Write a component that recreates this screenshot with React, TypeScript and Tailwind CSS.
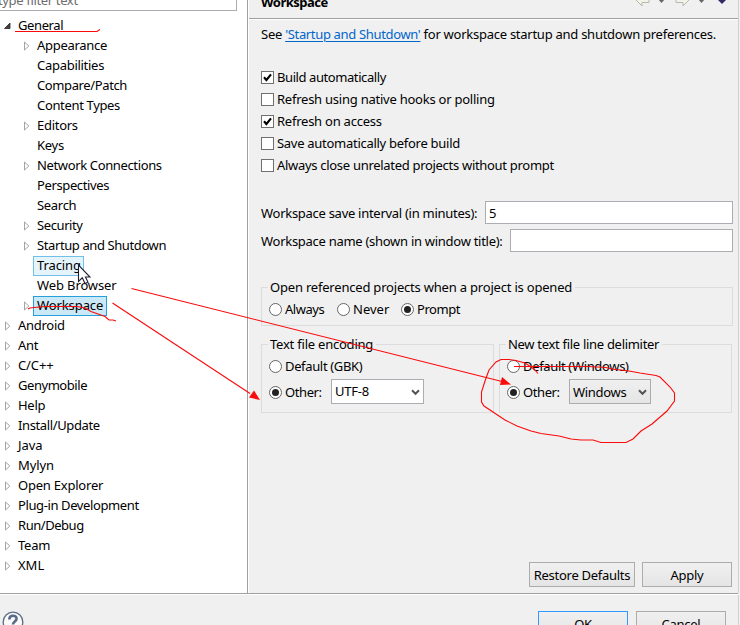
import type { ReactNode } from "react";

type Node = { label: string; level?: number; arrow?: boolean; open?: boolean; state?: "hover" | "selected"; tracking?: string };

const tree: Node[] = [
  { label: "General", arrow: true, open: true, tracking: "tracking-[-0.4px]" },
  { label: "Appearance", level: 1, arrow: true, tracking: "tracking-[-0.3px]" },
  { label: "Capabilities", level: 1 },
  { label: "Compare/Patch", level: 1, tracking: "tracking-[-0.38px]" },
  { label: "Content Types", level: 1, tracking: "tracking-[-0.34px]" },
  { label: "Editors", level: 1, arrow: true },
  { label: "Keys", level: 1 },
  { label: "Network Connections", level: 1, arrow: true, tracking: "tracking-[-0.36px]" },
  { label: "Perspectives", level: 1, tracking: "tracking-[-0.38px]" },
  { label: "Search", level: 1, tracking: "tracking-[-0.3px]" },
  { label: "Security", level: 1, arrow: true, tracking: "tracking-[-0.4px]" },
  { label: "Startup and Shutdown", level: 1, arrow: true, tracking: "tracking-[-0.4px]" },
  { label: "Tracing", level: 1, state: "hover", tracking: "tracking-[-0.1px]" },
  { label: "Web Browser", level: 1, tracking: "tracking-[-0.12px]" },
  { label: "Workspace", level: 1, arrow: true, state: "selected", tracking: "tracking-[-0.1px]" },
  { label: "Android", arrow: true },
  { label: "Ant", arrow: true },
  { label: "C/C++", arrow: true, tracking: "tracking-[-0.1px]" },
  { label: "Genymobile", arrow: true, tracking: "tracking-[-0.45px]" },
  { label: "Help", arrow: true },
  { label: "Install/Update", arrow: true, tracking: "tracking-[-0.38px]" },
  { label: "Java", arrow: true, tracking: "tracking-[-0.1px]" },
  { label: "Mylyn", arrow: true, tracking: "tracking-[-0.1px]" },
  { label: "Open Explorer", arrow: true, tracking: "tracking-[-0.22px]" },
  { label: "Plug-in Development", arrow: true, tracking: "tracking-[-0.39px]" },
  { label: "Run/Debug", arrow: true, tracking: "tracking-[-0.46px]" },
  { label: "Team", arrow: true, tracking: "tracking-[-0.2px]" },
  { label: "XML", arrow: true, tracking: "tracking-[0px]" },
];

function Row({ n }: { n: Node }) {
  const look =
    n.state === "hover"
      ? "border-[#70c0e7] bg-[#e5f3fb] w-[51px]"
      : n.state === "selected"
        ? "border-[#26a0da] bg-[#cbe8f6] w-[74px]"
        : "border-transparent";
  return (
    <div className={`flex h-5 items-center ${n.level ? "pl-[22px]" : "pl-[3px]"}`}>
      <svg width="9" height="10" viewBox="0 0 9 10" className="shrink-0">
        {n.open ? (
          <path d="M7 2V7.5H1.5Z" fill="#444" stroke="#262626" strokeWidth=".8" />
        ) : (
          n.arrow && <path d="M2.5 1V9L6.8 5Z" fill="#fff" stroke="#a2a2a2" />
        )}
      </svg>
      <span className={`ml-[2px] flex h-5 items-center border pl-[3px] ${look}`}>
        <span className={`-mt-[2px] ${n.tracking ?? ""}`}>{n.label}</span>
      </span>
    </div>
  );
}

function Check({ on, children }: { on?: boolean; children: ReactNode }) {
  return (
    <div className="flex h-[22px] items-center">
      <span className="mr-[3px] flex size-[13px] shrink-0 items-center justify-center border border-[#707070] bg-white">
        {on && (
          <svg width="11" height="11" viewBox="0 0 11 11" className="shrink-0">
            <path d="M2 5.2L4.4 8L9 2.4" fill="none" stroke="#000" strokeWidth="2.1" />
          </svg>
        )}
      </span>
      <span>{children}</span>
    </div>
  );
}

function Radio({ on, children, className = "" }: { on?: boolean; children: ReactNode; className?: string }) {
  return (
    <div className={`flex items-center ${className}`}>
      <span className="mr-[3px] flex size-[13px] shrink-0 items-center justify-center rounded-full border border-[#666] bg-white">
        {on && <span className="size-[7px] rounded-full bg-[#222]" />}
      </span>
      <span>{children}</span>
    </div>
  );
}

function Chevron() {
  return (
    <svg width="9" height="7" viewBox="0 0 9 7" className="mt-[2px] shrink-0">
      <path d="M1 1.2L4.5 4.8L8 1.2" fill="none" stroke="#555" strokeWidth="2" />
    </svg>
  );
}

function Group({ title, className, children }: { title: string; className: string; children: ReactNode }) {
  return (
    <div className={`flex flex-col border border-[#dcdcdc] ${className}`}>
      <div className="-mt-[11px] ml-[6px] flex h-[19px] shrink-0 items-center self-start bg-[#f0f0f0] pr-[3px] pl-[2px]">{title}</div>
      {children}
    </div>
  );
}

function Button({ className, children }: { className: string; children: ReactNode }) {
  return (
    <button
      className={`flex h-[25px] shrink-0 items-center justify-center border bg-linear-to-b from-[#f0f0f0] to-[#e5e5e5] ${className}`}
    >
      {children}
    </button>
  );
}

function NavArrow({ flip }: { flip?: boolean }) {
  return (
    <svg width="15" height="14" viewBox="0 0 15 14" className={flip ? "-scale-x-100" : ""}>
      <path d="M1 7L7 1V4H14V9.500H7V13Z" fill="#f2f2e8" stroke="#b8b8ae" />
    </svg>
  );
}

function Annotations() {
  return (
    <svg className="pointer-events-none absolute top-0 left-0" width="740" height="625" fill="none" stroke="#fa0a0a" strokeWidth="1.1">
      <path d="M15 31.5H97L100 29.5" />
      <path d="M28 309L30 308L34 307.5L45 306.5H77L85 308L91 311.5L105 316.5L109 320H113L116 321" />
      <path d="M131.500 288.500L502 381.500" />
      <path d="M112.500 303L250 393.500" />
      <path d="M260 400L249 397.500L254 390.500Z" fill="#fa0a0a" stroke="none" />
      <path d="M511 384.500L500 385L502 377Z" fill="#fa0a0a" stroke="none" />
      <path d="M538 373.500L534 369L525 363L516 360.500L509 359.500H501L496 362L489 370L485 381L481.500 392V402L484 406L493 412L505 420L517 426L531 431L541 433.500L559 436L571 439L581 440H593L601 442.500H626L633 439L641 431L652 424L667 411L674.500 401V393L670 387L660 377L656 375.500L640 373L629 371L612 369L606 367.500L588 366.500H514" />
      <path d="M78.500 265V281.500L82.300 277.800L85 283.500L88 282.200L85.500 277H90Z" fill="#fff" stroke="#202033" />
    </svg>
  );
}

export default function App() {
  return (
    <div className="relative flex h-[625px] w-[740px] flex-col overflow-hidden bg-[#f0f0f0] font-['Noto_Sans','Noto_Sans_CJK_SC',sans-serif] text-[13px] leading-[20px] tracking-[-0.28px] whitespace-nowrap text-black">
      <div className="flex h-[593px] shrink-0">
        <div className="flex w-[247px] shrink-0 flex-col bg-white">
          <div className="-mt-3 flex h-[23px] w-[237px] shrink-0 items-center border border-l-0 border-[#abadb3] text-[#6d6d6d]">
            <span className="-ml-[2px] tracking-[-0.35px]">type filter text</span>
          </div>
          <div className="mt-[5px] flex flex-col">
            {tree.map((n) => (
              <Row key={n.label} n={n} />
            ))}
          </div>
        </div>
        <div className="w-[2px] shrink-0 border-r border-l border-r-white border-l-[#a0a0a0]" />
        <div className="flex w-[489px] flex-col">
          <div className="flex h-[20px] shrink-0 items-end justify-between border-b border-white">
            <div className="flex h-[19px] w-full justify-between border-b border-[#a0a0a0] pl-3">
              <b className="-mt-[8px] tracking-[-0.5px]">Workspace</b>
              <div className="-mt-[7px] flex pr-[11px]">
                <NavArrow />
                <svg width="8" height="12" viewBox="0 0 8 12" className="mr-[9px] ml-[8px]">
                  <path d="M0 6H7L3.500 10Z" fill="#666" />
                </svg>
                <NavArrow flip />
                <svg width="8" height="12" viewBox="0 0 8 12" className="mr-[11px] ml-[8px]">
                  <path d="M0 6H7L3.500 10Z" fill="#666" />
                </svg>
                <svg width="10" height="12" viewBox="0 0 10 12">
                  <path d="M0 6H10L5 11Z" fill="#332a63" />
                </svg>
              </div>
            </div>
          </div>
          <div className="flex flex-col pl-3">
            <p className="mt-[4px] tracking-[-0.26px]">
              See <span className="tracking-[-0.34px] text-[#0066cc] underline underline-offset-2">'Startup and Shutdown'</span> for workspace startup and shutdown preferences.
            </p>
            <div className="mt-[22px] flex flex-col">
              <Check on>
                <span className="tracking-[-0.42px]">Build automatically</span>
              </Check>
              <Check>
                <span className="tracking-[-0.24px]">Refresh using native hooks or polling</span>
              </Check>
              <Check on>
                <span className="tracking-[-0.24px]">Refresh on access</span>
              </Check>
              <Check>Save automatically before build</Check>
              <Check>
                <span className="tracking-[-0.3px]">Always close unrelated projects without prompt</span>
              </Check>
            </div>
            <div className="mt-[25px] flex h-[23px] w-[472px] items-center justify-between">
              <span>Workspace save interval (in minutes):</span>
              <div className="flex h-[23px] w-[248px] items-center border border-[#abadb3] bg-white pl-[3px]">5</div>
            </div>
            <div className="mt-[5px] flex h-[23px] w-[472px] items-center justify-between">
              <span>Workspace name (shown in window title):</span>
              <div className="h-[23px] w-[223px] border border-[#abadb3] bg-white" />
            </div>
            <Group title="Open referenced projects when a project is opened" className="mt-[35px] h-[39px] w-[472px] tracking-[-0.2px]">
              <div className="mt-[3px] flex pl-[7px]">
                <Radio className="w-[68px] tracking-[-0.45px]">Always</Radio>
                <Radio className="w-[64px] tracking-normal">Never</Radio>
                <Radio on className="tracking-[-0.45px]">
                  Prompt
                </Radio>
              </div>
            </Group>
            <div className="mt-[18px] flex gap-[5px]">
              <Group title="Text file encoding" className="h-[69px] w-[233px] tracking-[-0.22px]">
                <Radio className="mt-[3px] ml-[7px] tracking-[-0.35px]">Default (GBK)</Radio>
                <div className="mt-[3px] flex items-center pl-[7px]">
                  <Radio on className="w-[62px] pt-px tracking-[-0.4px]">
                    Other:
                  </Radio>
                  <div className="flex h-[25px] w-[93px] items-center justify-between border border-[#abadb3] bg-white pr-[3px] pl-[3px]">
                    <span className="-mt-[1px]">UTF-8</span>
                    <Chevron />
                  </div>
                </div>
              </Group>
              <Group title="New text file line delimiter" className="h-[69px] w-[233px] tracking-[-0.3px]">
                <Radio className="mt-[3px] ml-[7px] tracking-[-0.34px]">Default (Windows)</Radio>
                <div className="mt-[3px] flex items-center pl-[7px]">
                  <Radio on className="w-[62px] pt-px tracking-[-0.4px]">
                    Other:
                  </Radio>
                  <div className="flex h-[25px] w-[82px] items-center justify-between border border-[#acacac] bg-linear-to-b from-[#f0f0f0] to-[#e5e5e5] pr-[3px] pl-[3px]">
                    Windows
                    <Chevron />
                  </div>
                </div>
              </Group>
            </div>
            <div className="mt-[149px] flex gap-[7px] pl-[268px]">
              <Button className="w-[106px] border-[#acacac]">Restore Defaults</Button>
              <Button className="w-[90px] border-[#acacac]">Apply</Button>
            </div>
          </div>
        </div>
        <div className="w-px bg-[#d0d0d0]" />
      </div>
      <div className="h-[2px] w-[738px] shrink-0 border-t border-b border-t-[#a0a0a0] border-b-white" />
      <div className="flex h-[30px] w-[739px] shrink-0 border-r border-[#d0d0d0]">
        <svg width="22" height="22" viewBox="0 0 22 22" className="mt-[16px] ml-[2px]">
          <circle cx="11" cy="11" r="9.800" fill="#fafafa" stroke="#5d6d86" strokeWidth="1.300" />
          <path d="M7.300 8.500C7.300 3.500 15 3.800 14.500 8C14.200 10.500 11 10.500 11 13.500M11 15V17" fill="none" stroke="#586b88" strokeWidth="2.600" />
        </svg>
        <Button className="mt-4 ml-[514px] w-[90px] border-[#3399ff]">OK</Button>
        <Button className="mt-4 ml-2 w-[90px] border-[#acacac]">Cancel</Button>
      </div>
      <Annotations />
    </div>
  );
}
